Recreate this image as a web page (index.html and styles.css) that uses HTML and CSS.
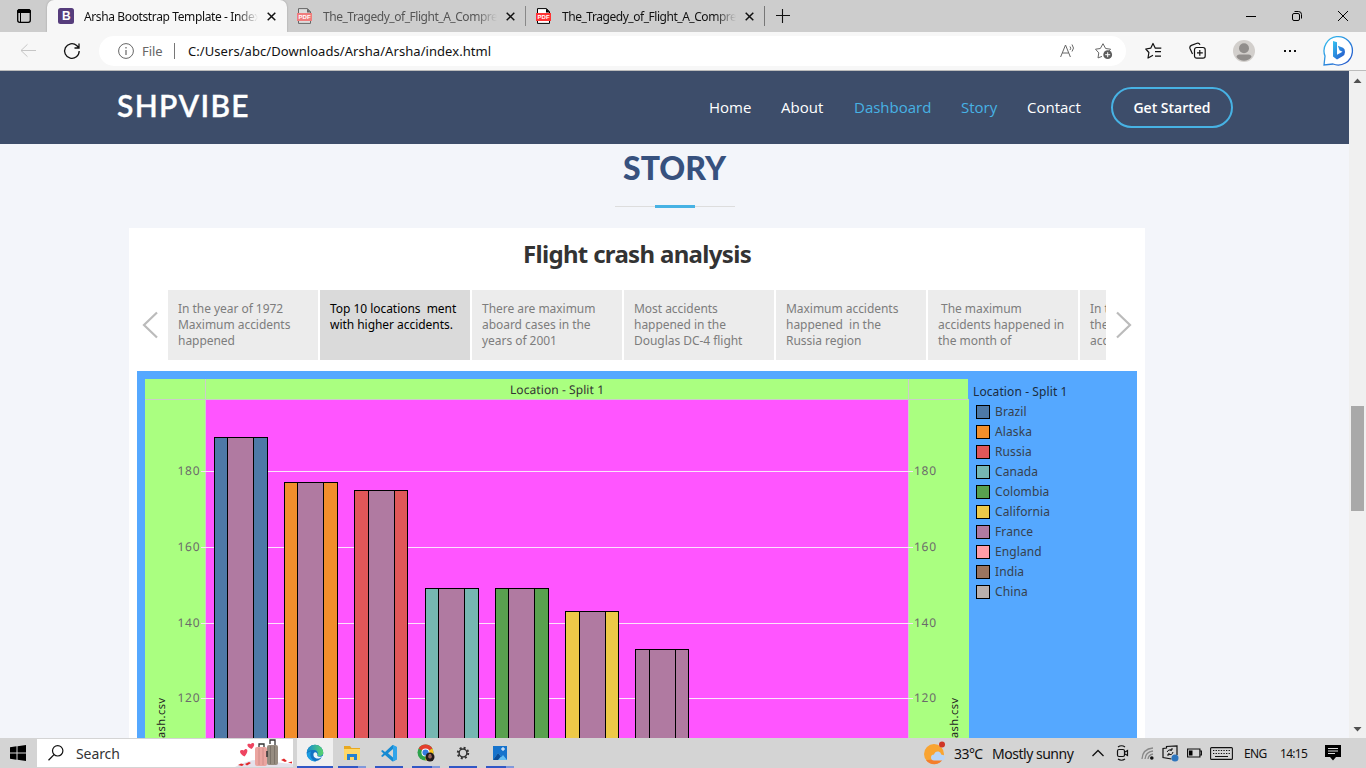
FILE: index.html
```html
<!DOCTYPE html>
<html lang="en">
<head>
<meta charset="utf-8">
<title>Arsha Bootstrap Template - Index</title>
<link rel="stylesheet" href="styles.css">
</head>
<body>
<header class="tabstrip">
  <div class="tab-menu"><svg width="16" height="16" viewBox="0 0 16 16"><rect x="1.7" y="1.7" width="12.6" height="12.6" rx="2" fill="none" stroke="#000" stroke-width="1.3"/><path d="M1.500 3.500a2 2 0 0 1 2-2h9a2 2 0 0 1 2 2V4.500h-13zM4.500 5v9" stroke="#000" fill="#000"/></svg></div>
  <div class="tab tab-active">
    <svg class="favicon" width="16" height="16"><rect width="16" height="16" rx="2.5" fill="#563d7c"/><text x="4" y="12.2" font-family="Liberation Sans" font-weight="700" font-size="12" fill="#fff">B</text></svg>
    <span class="tab-title t1">Arsha Bootstrap Template - Index</span>
    <svg class="close" width="9" height="9"><path d="M.7.7l7.6 7.6M8.3.7L.7 8.3" stroke="#111" stroke-width="1.5"/></svg>
  </div>
  <div class="tab tab-muted">
    <svg class="favicon" width="16" height="16"><path d="M1.5 15.4V.6h9l3 3.2v11.6z" fill="#ddd" stroke="#666"/><path d="M10 .5v4h4z" fill="#666"/><rect y="5" width="15" height="8" fill="#ef7d7d"/><text x="1.6" y="11.2" font-family="Liberation Sans" font-weight="700" font-size="6" fill="#fff">PDF</text></svg>
    <span class="tab-title t2">The_Tragedy_of_Flight_A_Compre</span>
    <svg class="close" width="9" height="9"><path d="M.7.7l7.6 7.6M8.3.7L.7 8.3" stroke="#111" stroke-width="1.5"/></svg>
  </div>
  <div class="tab tab-last">
    <svg class="favicon" width="16" height="16"><path d="M1.5 15.4V.6h9l3 3.2v11.6z" fill="#fff" stroke="#000"/><path d="M10 .5v4h4z" fill="#000"/><rect y="5" width="15" height="8" fill="#f33"/><text x="1.6" y="11.2" font-family="Liberation Sans" font-weight="700" font-size="6" fill="#fff">PDF</text></svg>
    <span class="tab-title t2">The_Tragedy_of_Flight_A_Compre</span>
    <svg class="close" width="9" height="9"><path d="M.7.7l7.6 7.6M8.3.7L.7 8.3" stroke="#111" stroke-width="1.5"/></svg>
  </div>
  <svg class="plus" width="14" height="14"><path d="M6.500 0v14M0 6.500h14" stroke="#111" stroke-width="1.1"/></svg>
  <div class="window-buttons">
    <svg width="10" height="12"><path d="M0 6.5h10" stroke="#000"/></svg>
    <svg width="10" height="12"><rect x=".5" y="3.5" width="7" height="7" rx="1.5" fill="none" stroke="#000"/><path d="M2.5 1.5h4a3 3 0 0 1 3 3v4" fill="none" stroke="#000"/></svg>
    <svg width="10" height="12"><path d="M0 1l10 10M10 1L0 11" stroke="#000"/></svg>
  </div>
</header>

<div class="toolbar">
  <svg class="back" width="16" height="16"><path d="M16 7.500H1M7.500 1.300L1 7.500l6.500 6.200" stroke="#c6c6c6" fill="none"/></svg>
  <svg class="reload" width="18" height="18"><path d="M16.200 9a7.300 7.300 0 1 1-2.500-5.500L16 6M16 1.500V6h-4.500" stroke="#111" stroke-width="1.300" fill="none"/></svg>
  <div class="address">
    <svg width="16" height="16"><circle cx="8" cy="8" r="7.400" fill="none" stroke="#666"/><path d="M8 7v5M8 4v1.400" stroke="#666" stroke-width="1.200"/></svg>
    <span class="scheme">File</span><i class="rule"></i>
    <span class="url">C:/Users/abc/Downloads/Arsha/Arsha/index.html</span>
    <svg class="read" width="16" height="16"><path d="M.6 14L5.500 2 10.400 14M2.300 10h6.400M10 3.500q1.500 1.800 0 3.500M12 1.500q3 3.700 0 7" fill="none" stroke="#666"/></svg>
    <svg class="addfav" width="18" height="18"><path d="M7 14.400l-4 1.500.8-5-3.300-3.700 4.800-.7L8 1.700l2.600 4.800 5 .7-1.700 1.800" fill="none" stroke="#666" stroke-linejoin="round"/><circle cx="12.700" cy="12.700" r="4.400" fill="#5c5c5c"/><path d="M12.700 10.200v5M10.200 12.700h5" stroke="#fff"/></svg>
  </div>
  <svg class="ico fav" width="18" height="18"><path d="M8 13.300L3 16l.9-5.500L.8 7l4.900-.8L8 1.500l2.300 4.700h6M10 9.700h6M10 14.200h6" fill="none" stroke="#111" stroke-width="1.200" stroke-linejoin="round"/></svg>
  <svg class="ico coll" width="18" height="18"><rect x="5.500" y="5.500" width="10.700" height="10.700" rx="2.200" fill="none" stroke="#111" stroke-width="1.200"/><path d="M10.800 8v5.800M8 10.800h5.800M3.500 12L1 6.500Q.3 4.300 2.400 3.400L8 1.200q2-.7 3 1.600" fill="none" stroke="#111" stroke-width="1.200"/></svg>
  <svg class="ico user" width="22" height="22"><circle cx="11" cy="11" r="11" fill="#d2cfcc"/><circle cx="11" cy="8.300" r="5" fill="#918e8c"/><path d="M3.500 17q.2-2.500 3-2.500h9q2.800 0 3 2.500-3 3.800-7.500 3.800T3.500 17z" fill="#918e8c"/></svg>
  <svg class="ico dots" width="14" height="4"><path d="M1 1h2v2H1zM6 1h2v2H6zM11 1h2v2h-2z" fill="#111"/></svg>
  <svg class="ico bing" width="32" height="32"><defs><linearGradient id="bg1" x1="0" y1="0" x2="1" y2="1"><stop stop-color="#35c3f1"/><stop offset="1" stop-color="#2450c9"/></linearGradient></defs><path d="M2 30l1-9A14.200 14.200 0 1 1 11 29z" fill="#fff" stroke="url(#bg1)" stroke-width="1.300"/><path d="M11 6l4 1.300v12.500l5.500-3-3-1.500-1.700-4.500 5.200 2q2 1 2 4.200 0 3-2.500 4.200l-5.500 3.200-4-2.800z" fill="url(#bg1)"/></svg>
</div>

<div class="viewport">
  <main class="site">
    <nav class="navbar">
      <a class="logo">SHPVIBE</a>
      <a class="nav n1">Home</a><a class="nav n2">About</a><a class="nav n3 on">Dashboard</a><a class="nav n4 on">Story</a><a class="nav n5">Contact</a>
      <a class="cta"><span>Get Started</span></a>
    </nav>
    <h2 class="section-title"><span>STORY</span></h2>
    <div class="underline"><i></i></div>
    <section class="story">
      <h1><span>Flight crash analysis</span></h1>
      <div class="points">
        <svg class="arrow" width="16" height="28"><path d="M15 1.500L2 14l13 12.500" fill="none" stroke="#bbb" stroke-width="2.200"/></svg>
        <div class="strip">
          <div class="point">In the year of 1972<br>Maximum accidents<br>happened</div>
          <div class="point current">Top 10 locations&nbsp; ment<br>with higher accidents.</div>
          <div class="point">There are maximum<br>aboard cases in the<br>years of 2001</div>
          <div class="point">Most accidents<br>happened in the<br>Douglas DC-4 flight</div>
          <div class="point">Maximum accidents<br>happened&nbsp; in the<br>Russia region</div>
          <div class="point"><span class="indent">The maximum</span><br>accidents happened in<br>the month of</div>
          <div class="point">In the<br>the<br>accidents</div>
        </div>
        <svg class="arrow" width="16" height="28"><path d="M1 1.500L14 14 1 26.500" fill="none" stroke="#bbb" stroke-width="2.200"/></svg>
      </div>
      <div class="dashboard">
        <svg class="chart" width="824" height="359" viewBox="145 379 824 359" shape-rendering="crispEdges">
          <path fill="#aaff80" d="M145 379h823v20h1v339H145z"/>
          <path fill="#ff55ff" d="M206 400h702v338H206z"/>
          <path stroke="#ccc" d="M145 399.500h823M205.500 379v359M908.500 379v359"/>
          <path stroke="#fbe3fb" d="M201 471.500h712M201 547.500h712M201 623.500h712M201 698.500h712"/>
          <g stroke="#000">
            <path fill="#4e79a7" d="M214.500 740V437.500h53V740"/><path fill="#b07aa1" d="M227.500 740V437.500h26V740"/>
            <path fill="#f28e2b" d="M284.500 740V482.500h53V740"/><path fill="#b07aa1" d="M297.500 740V482.500h26V740"/>
            <path fill="#e15759" d="M354.500 740V490.500h53V740"/><path fill="#b07aa1" d="M368.500 740V490.500h26V740"/>
            <path fill="#76b7b2" d="M425.500 740V588.500h53V740"/><path fill="#b07aa1" d="M438.500 740V588.500h26V740"/>
            <path fill="#59a14f" d="M495.500 740V588.500h53V740"/><path fill="#b07aa1" d="M508.500 740V588.500h26V740"/>
            <path fill="#edc948" d="M565.500 740V611.500h53V740"/><path fill="#b07aa1" d="M579.500 740V611.500h26V740"/>
            <path fill="#b07aa1" d="M635.500 740V649.500h53V740"/><path fill="#b07aa1" d="M649.500 740V649.500h26V740"/>
          </g>
          <text class="chart-head" x="510" y="394" textLength="94">Location - Split 1</text>
          <g class="ticks">
            <text x="177.500" y="475" textLength="22">180</text><text x="177.500" y="551" textLength="22">160</text><text x="177.500" y="627" textLength="22">140</text><text x="177.500" y="702" textLength="22">120</text>
            <text x="914" y="475" textLength="22">180</text><text x="914" y="551" textLength="22">160</text><text x="914" y="627" textLength="22">140</text><text x="914" y="702" textLength="22">120</text>
          </g>
          <text class="axis" transform="translate(165 738) rotate(-90)" textLength="40">ash.csv</text>
          <text class="axis" transform="translate(958 738) rotate(-90)" textLength="40">ash.csv</text>
        </svg>
        <div class="legend">
          <div class="legend-title">Location - Split 1</div>
          <div class="key"><i class="brazil"></i><span>Brazil</span></div>
          <div class="key"><i class="alaska"></i><span>Alaska</span></div>
          <div class="key"><i class="russia"></i><span>Russia</span></div>
          <div class="key"><i class="canada"></i><span>Canada</span></div>
          <div class="key"><i class="colombia"></i><span>Colombia</span></div>
          <div class="key"><i class="california"></i><span>California</span></div>
          <div class="key"><i class="france"></i><span>France</span></div>
          <div class="key"><i class="england"></i><span>England</span></div>
          <div class="key"><i class="india"></i><span>India</span></div>
          <div class="key"><i class="china"></i><span>China</span></div>
        </div>
      </div>
    </section>
  </main>
  <div class="scrollbar">
    <svg width="17" height="17"><path d="M4.500 12h8l-4-4.500z" fill="#505050"/></svg>
    <i class="thumb"></i>
    <svg width="17" height="17"><path d="M4.500 6h8l-4 4.500z" fill="#505050"/></svg>
  </div>
</div>

<footer class="taskbar">
  <div class="start"><svg width="16" height="16"><path d="M0 2.300l6.500-1v6.200H0zM7.500 1.200L16 0v7.500H7.500zM0 8.500h6.500v6.200l-6.500-1zM7.500 8.500H16V16l-8.500-1.200z"/></svg></div>
  <div class="search">
    <svg width="16" height="16"><circle cx="9.700" cy="5.800" r="5.200" fill="none" stroke="#111" stroke-width="1.200"/><path d="M6 9.600L.5 15.300" stroke="#111" stroke-width="1.300"/></svg>
    <span>Search</span>
    <svg class="luggage" width="58" height="28"><path d="M0 28Q17 18 30 22q18 2 28 3v3z" fill="#e4e1eb"/><g fill="#ee4460"><path d="M9.500 17.500C3 14 4.500 9.500 8.500 11.500c3-4 6.500 0 1 6z"/><path d="M16.500 10C10.500 7.500 12 3.500 15.500 5.300c3-3.500 6 0 1 4.700z"/></g><path d="M24 8V5h5v3M35 5V1h5v6" fill="none" stroke="#333" stroke-width="1.300"/><rect x="32" y="6" width="11" height="20" rx="2" fill="#968c80"/><path d="M35.500 7v18M39.500 7v18" stroke="#7b7268"/><rect x="20" y="8" width="12" height="19" rx="2" fill="#eba5a0"/><path d="M24 9v17M28 9v17" stroke="#d08c88"/><path d="M32 12v6" stroke="#333" stroke-width="1.500"/><path d="M3 26l3-1.500 3 1-2 1.500zM10 25l4-2 2 1-4 2.500zM46 21l3-1.500 3 2.500-2 1zM53 23.500l4-1v2z" fill="#e2282b"/></svg>
  </div>
  <div class="apps">
    <div class="app edge"><svg width="18" height="18"><defs><linearGradient id="eg"><stop stop-color="#148ad4"/><stop offset="1" stop-color="#58d56b"/></linearGradient></defs><circle cx="9" cy="9" r="8.300" fill="#1272c4"/><path d="M.7 9A8.300 8.300 0 0 1 17.300 9c0 3-4 4-6 2.500 1-2 .5-5-3-5.500C4 5.500 1.500 7 .7 9z" fill="url(#eg)"/><path d="M7.500 10c-.5 3 2 5 5.500 4.500l3-1.500c-.7 1-1.500 2-2 2.300l4-1v-3.300c-2 2.500-6 2-6.700.7.500-2-.8-3.500-2-3.500s-1.600.8-1.800 1.800z" fill="#eef5fa"/><path d="M5 7.500C3 12 6 17 10.500 17.200 6 18.500 1 14.500.7 9.800 1.500 8.500 3 7.600 5 7.500z" fill="#1b9de2"/></svg></div>
    <div class="app files split"><svg width="18" height="16"><path d="M1 1h6l1.500 2H17v12H1z" fill="#e8a820"/><path d="M1 4h16v11H1z" fill="#ffd867"/><path d="M4 15V9h10v6h-3v-3H7v3z" fill="#2581d0"/></svg></div>
    <div class="app code"><svg width="18" height="18"><path d="M12.500 1L5 8 2.500 6 1 7l2.500 2.500L1 12l1.500 1L5 11l7.500 6.500 4-2V3zM13 5v8.500L8 9.300z" fill="#168bd2" fill-rule="evenodd"/><path d="M13 1l4 2v12.500l-4 2z" fill="#31a4ea"/></svg></div>
    <div class="app chrome split"><svg width="18" height="18"><circle cx="8.500" cy="8.500" r="8" fill="#2ca24c"/><path d="M8.500 8.500L1.600 4.500a8 8 0 0 1 13.800 0z" fill="#e43e2e"/><path d="M8.500 8.500l6.900-4a8 8 0 0 1-6.900 12z" fill="#fcc31e"/><circle cx="8.500" cy="8.500" r="4" fill="#fff"/><circle cx="8.500" cy="8.500" r="3.100" fill="#347de0"/><circle cx="13" cy="13" r="4.500" fill="#221a1b"/><path d="M11 13q2 3 4 0l-1-3h-2z" fill="#98635b"/></svg></div>
    <div class="app settings"><svg width="16" height="16"><circle cx="8" cy="8" r="3.900" fill="none" stroke="#333" stroke-width="1.500"/><circle cx="8" cy="8" r="5.200" fill="none" stroke="#333" stroke-width="2" stroke-dasharray="2 2.084"/></svg></div>
    <div class="app photos split"><svg width="16" height="16"><path fill="#1673cc" d="M1 1h14v14H1z"/><path fill="#62bdf2" d="M1 15l5-7 3.500 4 1.500-2 4 5z"/><path fill="#0a4d99" d="M6 8L1 15h5l3-3.500z"/><path d="M11 2v4M9 4h4" stroke="#fff"/></svg></div>
  </div>
  <div class="tray">
    <svg class="weather" width="24" height="24"><circle cx="11" cy="13" r="10" fill="#f9a431"/><path d="M3 19a10 10 0 0 0 17-1z" fill="#f47e2b"/><path d="M11 19.500a3 3 0 0 1 0-6q1-3.500 4.500-3 2 .3 3 3.300 4 .2 3.500 3.200-.5 2.500-3 2.500z" fill="#b9d5f7"/><circle cx="19" cy="3.500" r="3" fill="#cf3526"/></svg>
    <span class="temp">33°C</span><span class="sky">Mostly sunny</span>
    <svg class="chev" width="12" height="8"><path d="M.5 7L6 1.500 11.500 7" fill="none" stroke="#111" stroke-width="1.300"/></svg>
    <svg class="cam" width="13" height="16"><rect x="1.500" y="4.500" width="7" height="7" rx="1.500" fill="none" stroke="#111" stroke-width="1.200"/><path d="M9 7l2.500-1.500v5L9 9M2 2q3.500-2.500 7 0M2 14q3.500 2.500 7 0" fill="none" stroke="#111" stroke-width="1.200"/></svg>
    <svg class="wifi" width="13" height="13"><path d="M1 12Q1.500 2 12 1M4 12q.5-7 8-8M7 12q.5-4 5-5" fill="none" stroke="#888" stroke-width="1.300"/><circle cx="10.800" cy="11" r="1.800" fill="#111"/></svg>
    <svg class="sync" width="17" height="17"><path d="M9.500 14L1 12.500v-9L4.500 3V1.500L15 1v9" fill="none" stroke="#111" stroke-width="1.200"/><path d="M5 7q1-3 5-2M10 3v2H8M11 7q-1 4-5 2M6 11V9h2" fill="none" stroke="#111"/><circle cx="13" cy="13" r="3.500" fill="#2d75bd"/></svg>
    <svg class="battery" width="15" height="10"><path d="M.6 1h12.300v8H.6zM13 3h1.500v4H13" fill="none" stroke="#111" stroke-width="1.200"/><path d="M2 2.500h3.500v5H2z"/></svg>
    <svg class="keyboard" width="23" height="13"><rect x=".6" y=".6" width="21.800" height="11.800" rx="1" fill="none" stroke="#111" stroke-width="1.100"/><path d="M3 3.500h17M3 6.500h17" stroke="#111" stroke-width="1.200" stroke-dasharray="1.300 1.300"/><path d="M5 9.500h13" stroke="#111"/></svg>
    <span class="lang">ENG</span><span class="clock">14:15</span>
    <svg class="note" width="16" height="16"><path d="M0 0h16v12h-5l-3 3.500L5 12H0z" fill="#000"/><path d="M3 3.500h10M3 6h10M3 8.500h7" stroke="#ddd"/></svg>
  </div>
</footer>
</body>
</html>
```
FILE: styles.css
```css
* { box-sizing: border-box; }
body { margin: 0; width: 1366px; height: 768px; overflow: hidden; display: flex; flex-direction: column; font-family: "Noto Sans", sans-serif; }
svg { display: block; flex: none; }
h1, h2 { margin: 0; }
span { white-space: nowrap; }

.tabstrip { height: 32px; flex: none; background: #cdcdcd; display: flex; align-items: center; font-size: 12px; color: #111; }
.tab-menu { width: 47px; padding-left: 16px; }
.tab { height: 32px; display: flex; align-items: center; }
.tab .favicon { margin-right: 10px; }
.tab-active { width: 240px; padding-left: 11px; background: #f7f7f7; border-radius: 7px 7px 0 0; box-shadow: 0 0 2px #999; }
.tab-muted { width: 239px; padding-left: 10px; color: #555; border-right: 1px solid #888; height: 20px; }
.tab-last { width: 239px; padding-left: 10px; border-right: 1px solid #777; height: 20px; }
.tab-title { width: 174px; overflow: hidden; -webkit-mask-image: linear-gradient(90deg, #000 88%, transparent); mask-image: linear-gradient(90deg, #000 88%, transparent); }
.close { margin-left: 9px; }
.t1 { letter-spacing: -.38px; }
.t2 { letter-spacing: -.46px; }
.plus { margin-left: 11px; }
.window-buttons { display: flex; gap: 36px; margin-left: auto; margin-right: 18px; }

.toolbar { height: 39px; flex: none; background: #f7f7f7; border-bottom: 1px solid #bcbcbc; display: flex; align-items: center; }
.back { margin-left: 20px; }
.reload { margin-left: 27px; }
.address { width: 1027px; height: 30px; margin-left: 18px; background: #fff; border-radius: 15px; display: flex; align-items: center; padding-left: 19px; font-size: 13px; color: #111; }
.scheme { width: 21px; margin-left: 8px; color: #666; letter-spacing: -.1px; }
.rule { width: 1px; height: 16px; margin: 0 13px 0 11px; background: #777; }
.url { width: 303px; letter-spacing: .06px; }
.read { margin-left: 569px; }
.addfav { margin-left: 19px; }
.fav { margin-left: 19px; }
.coll { margin-left: 26px; }
.user { margin-left: 26px; }
.dots { margin-left: 28px; }
.bing { margin-left: 25px; }

.viewport { height: 667px; flex: none; display: flex; }
.site { width: 1349px; height: 667px; overflow: hidden; background: #f3f5fa; }
.navbar { height: 73px; background: #3d4d6a; color: #fff; display: flex; align-items: center; font-family: "Open Sans", sans-serif; font-size: 15px; }
.logo { width: 709px; padding: 0 0 5px 117px; font-family: Lato, sans-serif; font-size: 30px; font-weight: 600; letter-spacing: 1.35px; -webkit-text-stroke: .3px #fff; }
.nav { padding-bottom: 2px; }
.n1 { width: 72px; } .n2 { width: 73px; } .n3 { width: 107px; } .n4 { width: 66px; } .n5 { width: 84px; }
.on { color: #47b2e4; }
.cta { width: 122px; height: 41px; border: 2px solid #47b2e4; border-radius: 21px; display: flex; align-items: center; justify-content: center; font-size: 14px; font-weight: 600; }
.section-title { height: 48px; line-height: 48px; text-align: center; font-family: Lato, sans-serif; font-size: 32px; font-weight: 900; color: #37517e; }
.underline { width: 120px; height: 3px; margin: 13px auto 20px 615px; display: flex; justify-content: center; background: linear-gradient(#f3f5fa 1px, #ddd 1px, #ddd 2px, #f3f5fa 2px); }
.underline i { width: 40px; height: 3px; background: #47b2e4; }

.story { width: 1016px; height: 530px; margin-left: 129px; margin-top: 20px; background: #fff; }
.story h1 { height: 62px; padding-top: 8px; line-height: 36px; text-align: center; font-size: 24px; font-weight: 700; letter-spacing: -.68px; color: #333; }
.points { height: 70px; display: flex; align-items: center; padding: 0 13px 0 13px; justify-content: space-between; }
.strip { width: 938px; height: 70px; display: flex; gap: 2px; overflow: hidden; }
.point { width: 150px; flex: none; padding: 11px 0 0 10px; background: #ececec; color: #7d7d7d; font-size: 12px; line-height: 16px; letter-spacing: -.04px; white-space: nowrap; }
.current { background: #dadada; color: #000; }
.indent { padding-left: 3px; }
.dashboard { width: 1000px; height: 387px; margin: 11px 8px 0; padding: 8px 0 0 8px; background: #55a8ff; display: flex; }
.chart { font-family: "Noto Sans", sans-serif; }
.chart text { text-rendering: geometricPrecision; }
.chart-head { font-size: 12px; fill: #333; }
.ticks { font-size: 12px; fill: #6a6a6a; }
.axis { font-size: 11px; fill: #222; }
.legend { padding: 3px 0 0 4px; color: #37414d; font-size: 12px; letter-spacing: .1px; }
.legend-title { height: 20px; line-height: 20px; color: #1b2c40; white-space: nowrap; }
.key { height: 20px; display: flex; align-items: center; padding-left: 3px; }
.key span { padding-bottom: 2px; }
.key i { width: 14px; height: 14px; margin-right: 5px; border: 1px solid #000; }
.brazil { background: #4e79a7; } .alaska { background: #f28e2b; } .russia { background: #e15759; } .canada { background: #76b7b2; } .colombia { background: #59a14f; }
.california { background: #edc948; } .france { background: #b07aa1; } .england { background: #ff9da7; } .india { background: #9c755f; } .china { background: #bab0ac; }

.scrollbar { width: 17px; background: #f0f0f0; display: flex; flex-direction: column; justify-content: space-between; }
.thumb { width: 13px; height: 105px; margin: 318px 2px auto; background: #a9a9a9; }

.taskbar { height: 30px; flex: none; display: flex; align-items: center; background: #d4d4d4; color: #111; }
.start { width: 37px; height: 30px; padding: 7px 0 0 10px; }
.search { width: 256px; height: 28px; background: #fff; display: flex; align-items: center; padding-left: 11px; font-size: 14px; color: #333; }
.search span { width: 60px; margin-left: 12px; letter-spacing: -.1px; }
.luggage { margin-left: 99px; }
.apps { display: flex; margin-left: 4px; }
.app { width: 37px; height: 30px; display: flex; align-items: center; justify-content: center; background: linear-gradient(#3157c5, #3157c5) 50% 100% / 28px 2px no-repeat; }
.split { background: linear-gradient(90deg, #3157c5 20px, #8098db 20px) 50% 100% / 28px 2px no-repeat; }
.edge { width: 36px; background: linear-gradient(#3157c5, #3157c5) 0 100% / 100% 2px no-repeat #f0f0f0; }
.tray { display: flex; align-items: center; margin-left: auto; width: 443px; font-size: 14px; }
.temp { width: 29px; margin-left: 7px; letter-spacing: -.55px; }
.sky { width: 82px; margin-left: 9px; letter-spacing: -.48px; }
.chev { margin-left: 18px; }
.cam { margin-left: 12px; }
.wifi { margin-left: 12px; }
.sync { margin-left: 8px; }
.battery { margin-left: 8px; }
.keyboard { margin-left: 8px; }
.lang { width: 23px; margin-left: 11px; font-size: 12px; letter-spacing: -.6px; }
.clock { width: 27px; margin-left: 13px; font-size: 12px; letter-spacing: -.7px; }
.note { margin-left: 18px; }
```
